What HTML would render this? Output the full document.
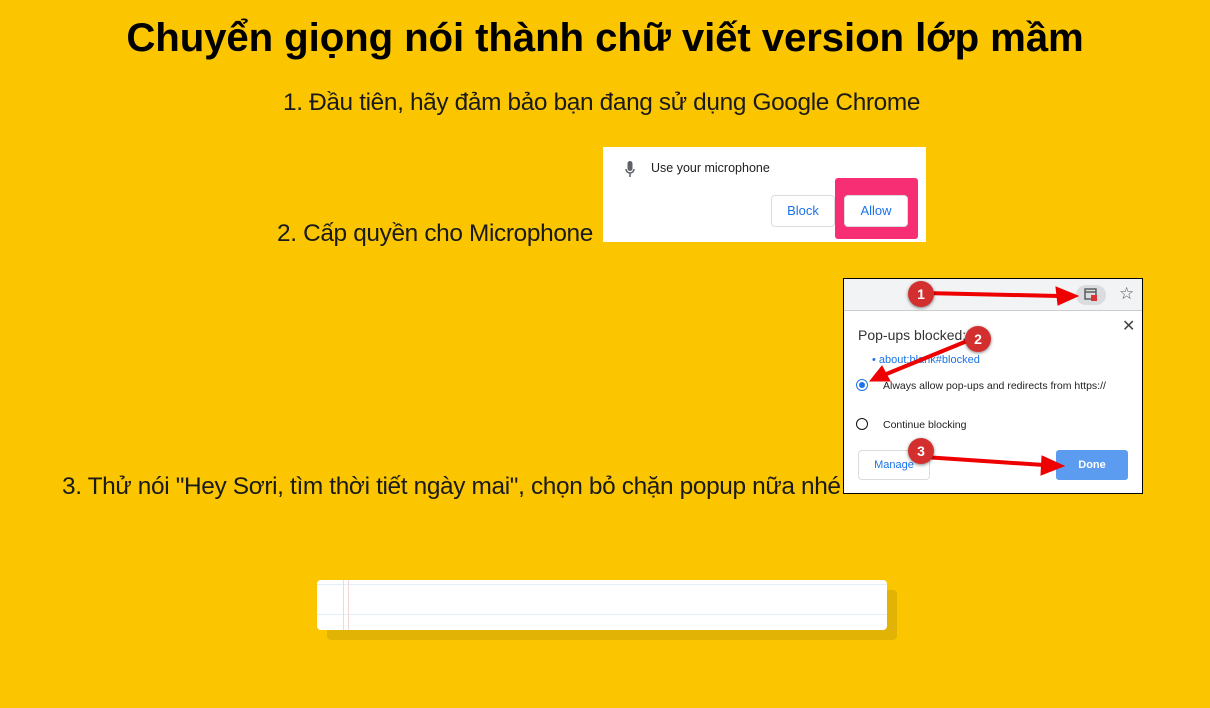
<!DOCTYPE html>
<html><head><meta charset="utf-8"><style>
body{margin:0;width:1210px;height:708px;background:#FBC600;font-family:"Liberation Sans",sans-serif;position:relative;overflow:hidden}
.a{position:absolute}
h1{position:absolute;left:0;width:1210px;top:15px;margin:0;text-align:center;font-size:40.2px;font-weight:bold;color:#000;letter-spacing:-0.1px}
.t{position:absolute;font-size:24.4px;color:#1a1a1a;white-space:nowrap;letter-spacing:-0.35px}
.btn{position:absolute;border:1px solid #dadce0;border-radius:4px;color:#1a73e8;font-size:13px;text-align:center;background:#fff;box-sizing:border-box}
.circ{position:absolute;width:26px;height:26px;border-radius:50%;background:#d32f2f;color:#fff;font-size:14px;font-weight:bold;text-align:center;line-height:26px;box-shadow:0 1px 3px rgba(0,0,0,.5)}
</style></head><body>
<h1>Chuyển giọng nói thành chữ viết version lớp mầm</h1>
<div class="t" style="left:283px;top:89px">1. Đầu tiên, hãy đảm bảo bạn đang sử dụng Google Chrome</div>
<div class="t" style="left:277px;top:220px">2. Cấp quyền cho Microphone</div>
<div class="t" style="left:62px;top:473px">3. Thử nói "Hey Sơri, tìm thời tiết ngày mai", chọn bỏ chặn popup nữa nhé</div>

<div class="a" style="left:603px;top:147px;width:323px;height:95px;background:#fff">
 <svg class="a" style="left:22px;top:14px" width="10" height="17" viewBox="0 0 10 17"><rect x="2.5" y="0" width="5" height="10" rx="2.5" fill="#5f6368"/><path d="M1 8a4 4 0 0 0 8 0M5 12v4" stroke="#5f6368" stroke-width="1.5" fill="none"/></svg>
 <div class="a" style="left:48px;top:14px;font-size:12.5px;color:#202124">Use your microphone</div>
 <div class="btn" style="left:168px;top:48px;width:64px;height:32px;line-height:30px">Block</div>
 <div class="a" style="left:232px;top:31px;width:83px;height:61px;background:#F72E73;border-radius:3px"></div>
 <div class="btn" style="left:241px;top:48px;width:64px;height:32px;line-height:30px">Allow</div>
</div>

<div class="a" style="left:843px;top:278px;width:298px;height:214px;background:#fff;border:1px solid #000">
 <div class="a" style="left:0;top:0;width:298px;height:31px;background:#f1f3f4;border-bottom:1px solid #ccc"></div>
 <div class="a" style="left:232px;top:6px;width:30px;height:20px;border-radius:10px;background:#dadce0"></div>
 <svg class="a" style="left:240px;top:9px" width="14" height="14" viewBox="0 0 14 14"><rect x="1" y="1" width="11" height="10" fill="none" stroke="#555" stroke-width="1.4"/><line x1="1" y1="4" x2="12" y2="4" stroke="#555" stroke-width="1.4"/><rect x="7" y="7" width="6" height="6" fill="#d33"/></svg>
 <div class="a" style="left:275px;top:5px;font-size:17px;color:#555">☆</div>
 <div class="a" style="left:278px;top:37px;font-size:16px;color:#444">✕</div>
 <div class="a" style="left:14px;top:48px;font-size:14px;color:#333">Pop-ups blocked:</div>
 <div class="a" style="left:28px;top:75px;font-size:11px;color:#1a73e8">• about:blank#blocked</div>
 <div class="a" style="left:12px;top:100px;width:10px;height:10px;border:1.5px solid #1a73e8;border-radius:50%"><div class="a" style="left:2px;top:2px;width:6px;height:6px;border-radius:50%;background:#1a73e8"></div></div>
 <div class="a" style="left:39px;top:101px;font-size:10.5px;color:#222">Always allow pop-ups and redirects from https://</div>
 <div class="a" style="left:12px;top:139px;width:10px;height:10px;border:1.5px solid #111;border-radius:50%"></div>
 <div class="a" style="left:39px;top:140px;font-size:10.5px;color:#222">Continue blocking</div>
 <div class="btn" style="left:14px;top:171px;width:72px;height:30px;line-height:28px;font-size:11px">Manage</div>
 <div class="a" style="left:212px;top:171px;width:72px;height:30px;line-height:30px;background:#5c9cf0;border-radius:3px;color:#fff;font-size:11px;font-weight:bold;text-align:center">Done</div>
 <svg class="a" style="left:0;top:0" width="298" height="214"><g fill="#e00" stroke="#e00">
  <path d="M80 14 L215 17" stroke-width="4"/><path d="M234 17 L212 8 L214 26Z"/>
  <path d="M128 60 L40 96" stroke-width="4"/><path d="M26 102 L38 87 L46 102Z"/>
  <path d="M80 178 L200 186" stroke-width="4"/><path d="M220 187 L198 177 L197 196Z"/>
 </g></svg>
 <div class="circ" style="left:64px;top:2px">1</div>
 <div class="circ" style="left:121px;top:47px">2</div>
 <div class="circ" style="left:64px;top:159px">3</div>
</div>

<div class="a" style="left:327px;top:590px;width:570px;height:50px;background:#E0B304;border-radius:4px"></div>
<div class="a" style="left:317px;top:580px;width:570px;height:50px;background:#fff;border-radius:4px;overflow:hidden">
 <div class="a" style="left:0;top:4px;width:570px;height:1px;background:#e3eef5"></div>
 <div class="a" style="left:0;top:34px;width:570px;height:1px;background:#e3eef5"></div>
 <div class="a" style="left:26px;top:0;width:1px;height:50px;background:#f0d8d8"></div>
 <div class="a" style="left:31px;top:0;width:1px;height:50px;background:#f0d8d8"></div>
</div>
</body></html>
